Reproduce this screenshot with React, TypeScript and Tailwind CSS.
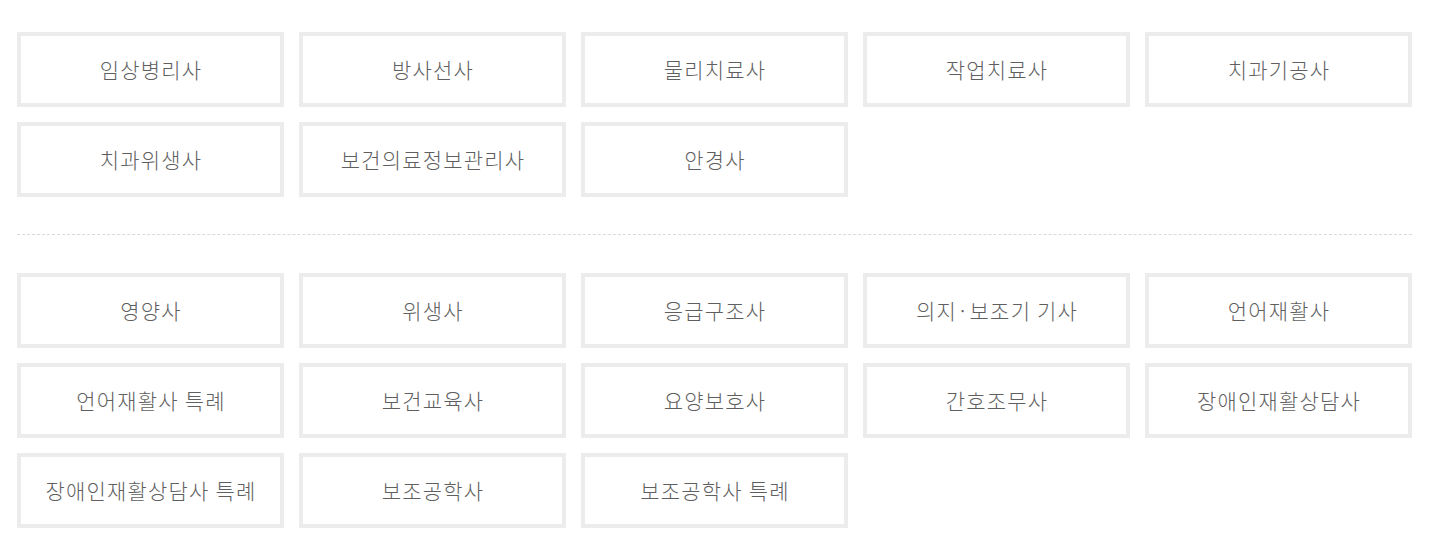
const groupA = [
	"임상병리사",
	"방사선사",
	"물리치료사",
	"작업치료사",
	"치과기공사",
	"치과위생사",
	"보건의료정보관리사",
	"안경사",
];

const groupB = [
	"영양사",
	"위생사",
	"응급구조사",
	"의지·보조기 기사",
	"언어재활사",
	"언어재활사 특례",
	"보건교육사",
	"요양보호사",
	"간호조무사",
	"장애인재활상담사",
	"장애인재활상담사 특례",
	"보조공학사",
	"보조공학사 특례",
];

function Grid({ items }: { items: string[] }) {
	return (
		<ul className="grid grid-cols-5 gap-[15px]">
			{items.map((name) => (
				<li
					key={name}
					className="flex h-[75px] items-center justify-center border-4 border-[#ececec] bg-white pl-[1px] text-[21px] font-light tracking-[1.2px] text-[#5f5f5f]"
				>
					{name}
				</li>
			))}
		</ul>
	);
}

export default function App() {
	return (
		<section
			className="min-h-[560px] bg-white pt-[32px]"
			style={{ fontFamily: '"Noto Sans CJK KR", "Noto Sans", sans-serif' }}
		>
			<div className="ml-[17px] w-[1395px]">
				<Grid items={groupA} />
				<div className="mt-[37px] mb-[38px] border-t border-dashed border-[#d9d9d9]"></div>
				<Grid items={groupB} />
			</div>
		</section>
	);
}
